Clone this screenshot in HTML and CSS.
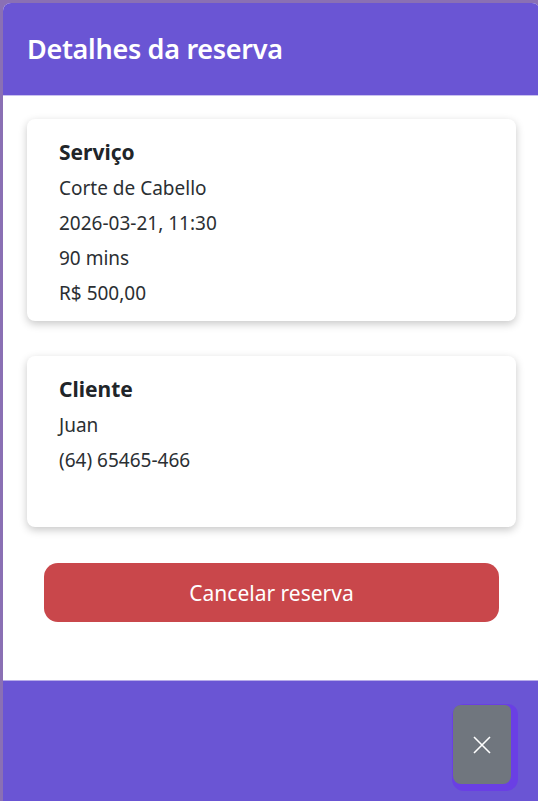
FILE: index.html
```html
<!DOCTYPE html>
<html lang="pt">
<head>
    <meta charset="UTF-8">
    <meta name="viewport" content="width=device-width, initial-scale=1.0">
    <title>Detalhes da reserva</title>
    <link rel="stylesheet" href="styles.css">
</head>
<body>
    <div class="modal">
        <div class="modal-header">
            <h2 class="modal-title">Detalhes da reserva</h2>
        </div>

        <div class="modal-body">
            <div class="card">
                <h3 class="card-title">Serviço</h3>
                <p>Corte de Cabello</p>
                <p>2026-03-21, 11:30</p>
                <p>90 mins</p>
                <p>R$ 500,00</p>
            </div>

            <div class="card card-client">
                <h3 class="card-title">Cliente</h3>
                <p>Juan</p>
                <p>(64) 65465-466</p>
            </div>

            <button class="btn-cancel">Cancelar reserva</button>
        </div>

        <div class="modal-footer">
            <button class="btn-close" aria-label="Fechar">
                <svg width="18" height="18" viewBox="0 0 18 18">
                    <path d="M1 1 L17 17 M17 1 L1 17" stroke="#fff" stroke-width="1.6" fill="none"/>
                </svg>
            </button>
        </div>
    </div>
</body>
</html>
```

FILE: styles.css
```css
body {
    margin: 0;
    padding: 3px 0 0 3px;
    background-color: #8a70b4;
    font-family: 'Noto Sans', 'Open Sans', sans-serif;
    color: #212529;
    height: 801px;
    box-sizing: border-box;
    overflow: hidden;
}

.modal {
    width: 537px;
    border-radius: 8px 8px 0 0;
    overflow: hidden;
    background-color: #fff;
}

.modal-header {
    background-color: #6a55d4;
    height: 93px;
    padding: 0 24px;
    display: flex;
    align-items: center;
    box-sizing: border-box;
    border-bottom: 1px solid #c9c1ef;
}

.modal-title {
    margin: 0 0 2px 0;
    color: #fff;
    font-size: 27px;
    font-weight: 600;
    letter-spacing: -0.3px;
}

.modal-body {
    padding: 23px 24px 58px 24px;
    display: flex;
    flex-direction: column;
}

.card {
    background-color: #fff;
    border-radius: 8px;
    box-shadow: 0 3px 8px rgba(0, 0, 0, 0.22);
    padding: 18px 32px 14px 32px;
    margin-bottom: 35px;
}

.card-client {
    min-height: 171px;
    box-sizing: border-box;
    margin-bottom: 36px;
}

.card-title {
    margin: 0 0 8px 0;
    font-size: 21px;
    font-weight: 700;
    line-height: 30px;
}

.card p {
    margin: 0 0 8px 0;
    font-size: 19px;
    line-height: 27px;
    color: #2b2f33;
}

.card p:last-child {
    margin-bottom: 0;
}

.btn-cancel {
    margin: 0 17px;
    height: 59px;
    border: none;
    border-radius: 14px;
    background-color: #c9474b;
    color: #fff;
    font-family: inherit;
    font-size: 21px;
    cursor: pointer;
}

.modal-footer {
    background-color: #6a55d4;
    border-top: 1px solid #b7abe9;
    height: 130px;
    display: flex;
    justify-content: flex-end;
    align-items: flex-start;
    padding: 24px 29px 0 0;
    box-sizing: border-box;
}

.btn-close {
    width: 58px;
    height: 79px;
    border: none;
    border-radius: 8px 6px 8px 8px;
    background-color: #70767e;
    box-shadow: 3px 3px 0 4px #6a3fe4;
    display: flex;
    align-items: center;
    justify-content: center;
    padding: 0;
    cursor: pointer;
}
```
